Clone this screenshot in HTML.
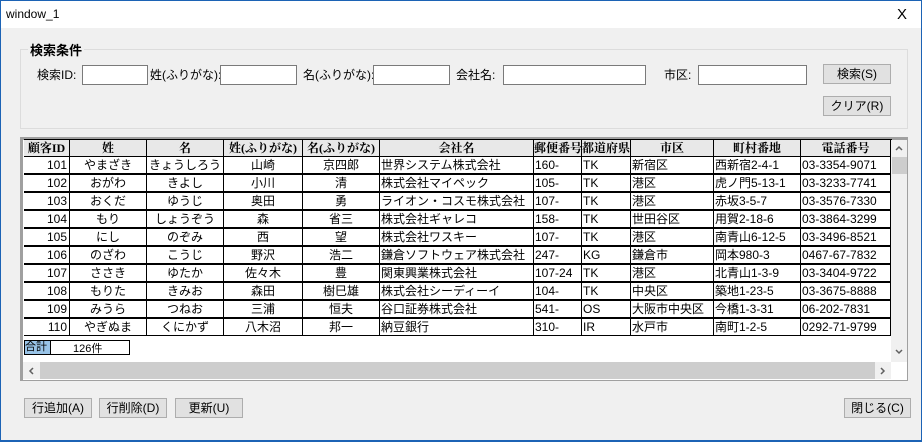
<!DOCTYPE html>
<html><head><meta charset="utf-8">
<style>
*{box-sizing:border-box;margin:0;padding:0}
body{width:922px;height:442px;overflow:hidden;background:#1c63b5;font-family:"Liberation Sans","Noto Sans CJK JP",sans-serif;font-size:12px;color:#000;position:relative}
.win{position:absolute;left:1px;top:0;width:920px;height:440px;background:#f0f0f0}
.title{position:absolute;left:0;top:0;width:920px;height:28px;background:#fff;border-top:1px solid #1c63b5}
.title span{position:absolute;left:5px;top:6px;font-size:12px}
.title b{position:absolute;right:14px;top:5px;font-weight:normal;font-size:15px}
.a{position:absolute}
.grp{position:absolute;left:19px;top:49px;width:888px;height:80px;border:1px solid #dcdcdc}
.grpt{position:absolute;left:27px;top:40px;background:#f0f0f0;padding:0 2px;font-weight:bold;font-size:13px}
.lbl{position:absolute;top:66px;font-size:12px}
.inp{position:absolute;top:65px;height:20px;background:#fff;border:1px solid #7a7a7a}
.btn{position:absolute;height:20px;background:#e1e1e1;border:1px solid #adadad;text-align:center;line-height:18px;font-size:12px}
.grid{position:absolute;left:19px;top:137px;width:888px;height:244px;background:#fff;border:1px solid #a0a0a0;border-left:3px solid #a0a0a0;border-top:3px solid #a0a0a0}
.row{position:absolute;left:23px;width:868px;height:18px;border-top:1px solid #000;border-bottom:1px solid #000}
.c{position:absolute;top:0;height:16px;border-right:1px solid #000;line-height:16px;white-space:nowrap;overflow:hidden;font-size:12px}
.h .c{background:#e8e8e8;font-weight:bold;text-align:center;font-family:"Liberation Serif","Noto Serif CJK SC",serif}
.r{text-align:right;padding-right:2px}.m{text-align:center}.l{text-align:left;padding-left:1px}
</style></head><body>
<div class="win">
<div class="title"><span>window_1</span><b>X</b></div>
<div class="grp"></div><div class="grpt">検索条件</div>
<div class="lbl" style="left:36px">検索ID:</div><div class="inp" style="left:81px;width:66px"></div>
<div class="lbl" style="left:149px">姓(ふりがな):</div><div class="inp" style="left:219px;width:77px"></div>
<div class="lbl" style="left:302px">名(ふりがな):</div><div class="inp" style="left:372px;width:77px"></div>
<div class="lbl" style="left:455px">会社名:</div><div class="inp" style="left:502px;width:143px"></div>
<div class="lbl" style="left:663px">市区:</div><div class="inp" style="left:697px;width:109px"></div>
<div class="btn" style="left:822px;top:64px;width:68px">検索(S)</div>
<div class="btn" style="left:822px;top:96px;width:68px">クリア(R)</div>
<div class="grid"></div>
<div id="rows"></div>
<div class="a" style="left:890px;top:140px;width:16px;height:222px;background:#f0f0f0"></div>
<svg class="a" style="left:893px;top:144px" width="10" height="8"><path d="M2 6 L5 3 L8 6" stroke="#606060" stroke-width="1.5" fill="none"/></svg>
<div class="a" style="left:891px;top:157px;width:15px;height:17px;background:#cdcdcd"></div>
<svg class="a" style="left:893px;top:348px" width="10" height="8"><path d="M2 2 L5 5 L8 2" stroke="#606060" stroke-width="1.5" fill="none"/></svg>
<div class="a" style="left:22px;top:362px;width:868px;height:17px;background:#cdcdcd"></div>
<div class="a" style="left:22px;top:362px;width:17px;height:17px;background:#f0f0f0"></div>
<svg class="a" style="left:26px;top:366px" width="8" height="10"><path d="M6 2 L3 5 L6 8" stroke="#606060" stroke-width="1.5" fill="none"/></svg>
<div class="a" style="left:874px;top:362px;width:16px;height:17px;background:#f0f0f0"></div>
<svg class="a" style="left:878px;top:366px" width="8" height="10"><path d="M2 2 L5 5 L2 8" stroke="#606060" stroke-width="1.5" fill="none"/></svg>
<div class="a" style="left:23px;top:340px;width:106px;height:15px;border:1px solid #000;background:#fff"></div>
<div class="a" style="left:24px;top:341px;width:26px;height:13px;background:#99c4e8;font-size:11px;line-height:13px;border-right:1px solid #000">合計</div>
<div class="a" style="left:72px;top:340px;font-size:11px">126件</div>
<div class="btn" style="left:23px;top:398px;width:68px">行追加(A)</div>
<div class="btn" style="left:98px;top:398px;width:68px">行削除(D)</div>
<div class="btn" style="left:174px;top:398px;width:68px">更新(U)</div>
<div class="btn" style="left:843px;top:398px;width:67px">閉じる(C)</div>
</div>
<script>
const cols=[[23,69,'r'],[69,146,'m'],[146,223,'m'],[223,302,'m'],[302,379,'m'],[379,533,'l'],[533,581,'l'],[581,630,'l'],[630,713,'l'],[713,800,'l'],[800,890,'l']];
const hdr=['顧客ID','姓','名','姓(ふりがな)','名(ふりがな)','会社名','郵便番号','都道府県','市区','町村番地','電話番号'];
const data=[
['101','やまざき','きょうしろう','山崎','京四郎','世界システム株式会社','160-','TK','新宿区','西新宿2-4-1','03-3354-9071'],
['102','おがわ','きよし','小川','清','株式会社マイペック','105-','TK','港区','虎ノ門5-13-1','03-3233-7741'],
['103','おくだ','ゆうじ','奥田','勇','ライオン・コスモ株式会社','107-','TK','港区','赤坂3-5-7','03-3576-7330'],
['104','もり','しょうぞう','森','省三','株式会社ギャレコ','158-','TK','世田谷区','用賀2-18-6','03-3864-3299'],
['105','にし','のぞみ','西','望','株式会社ワスキー','107-','TK','港区','南青山6-12-5','03-3496-8521'],
['106','のざわ','こうじ','野沢','浩二','鎌倉ソフトウェア株式会社','247-','KG','鎌倉市','岡本980-3','0467-67-7832'],
['107','ささき','ゆたか','佐々木','豊','関東興業株式会社','107-24','TK','港区','北青山1-3-9','03-3404-9722'],
['108','もりた','きみお','森田','樹巳雄','株式会社シーディーイ','104-','TK','中央区','築地1-23-5','03-3675-8888'],
['109','みうら','つねお','三浦','恒夫','谷口証券株式会社','541-','OS','大阪市中央区','今橋1-3-31','06-202-7831'],
['110','やぎぬま','くにかず','八木沼','邦一','納豆銀行','310-','IR','水戸市','南町1-2-5','0292-71-9799']];
let h='';
function row(t,vals,cls){h+=`<div class="row ${cls}" style="top:${t}px">`;vals.forEach((v,i)=>{const c=cols[i];h+=`<div class="c ${cls?'':c[2]}" style="left:${c[0]-23}px;width:${c[1]-c[0]}px">${v}</div>`});h+='</div>';}
row(139,hdr,'h');
data.forEach((d,i)=>row(156+i*18,d,''));
document.getElementById('rows').innerHTML=h;
</script>
</body></html>
